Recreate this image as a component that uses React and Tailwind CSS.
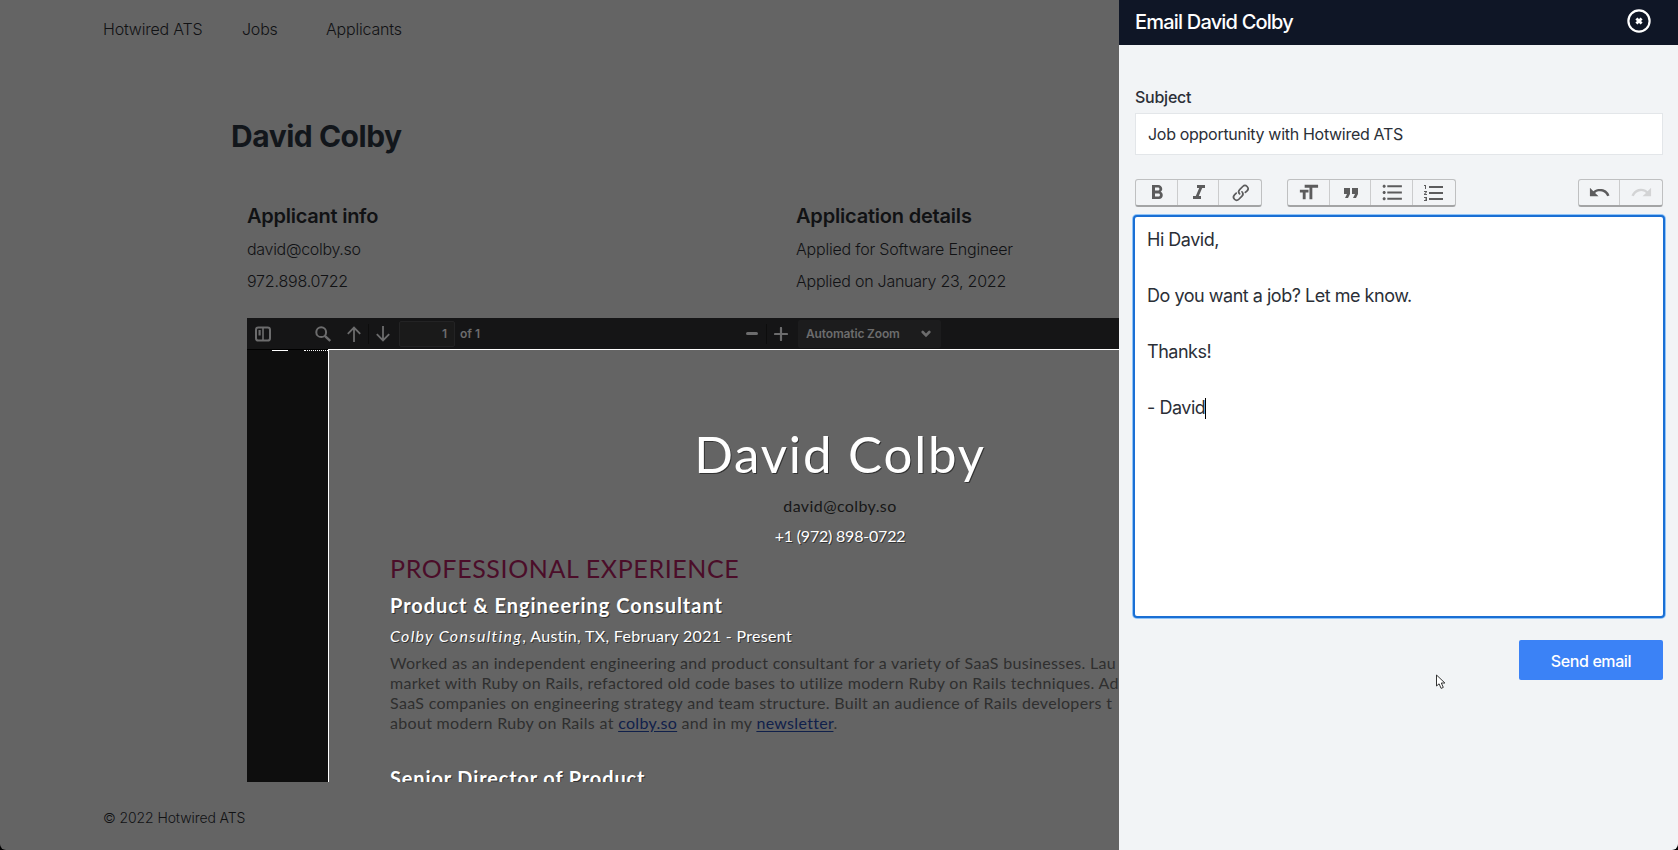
import {
  MdFormatBold,
  MdFormatItalic,
  MdFormatQuote,
  MdFormatListBulleted,
  MdFormatListNumbered,
} from "react-icons/md";

const LinkIcon = () => (
  <svg viewBox="0 0 24 24" className="size-[22px]" fill="currentColor">
    <path d="M9.88 13.7a4.3 4.3 0 0 1 0-6.07l3.37-3.37a4.26 4.26 0 0 1 6.07 0 4.3 4.3 0 0 1 0 6.06l-1.96 1.72a.91.91 0 1 1-1.3-1.3l1.97-1.71a2.46 2.46 0 0 0-3.48-3.48l-3.38 3.37a2.46 2.46 0 0 0 0 3.48.91.91 0 1 1-1.3 1.3z" />
    <path d="M4.25 19.46a4.3 4.3 0 0 1 0-6.07l1.93-1.9a.91.91 0 1 1 1.3 1.3l-1.93 1.9a2.46 2.46 0 0 0 3.48 3.48l3.37-3.38c.96-.96.96-2.52 0-3.48a.91.91 0 1 1 1.3-1.3 4.3 4.3 0 0 1 0 6.07l-3.38 3.38a4.26 4.26 0 0 1-6.07 0z" />
  </svg>
);

const HeadingIcon = () => (
  <svg viewBox="0 0 24 24" className="size-[23px]" fill="currentColor">
    <path d="M12 9v3H9v7H6v-7H3V9h9zM8 4h14v3h-6v12h-3V7H8V4z" />
  </svg>
);

const UndoIcon = () => (
  <svg viewBox="0 0 24 24" className="size-[23px]" fill="currentColor">
    <path d="M12.5 8c-2.6 0-5 1-6.9 2.6L2 7v9h9l-3.6-3.6A8 8 0 0 1 20 16l2.4-.8a10.5 10.5 0 0 0-10-7.2z" />
  </svg>
);

const RedoIcon = () => (
  <svg viewBox="0 0 24 24" className="size-[23px]" fill="currentColor">
    <path d="M18.4 10.6a10.5 10.5 0 0 0-16.9 4.6L4 16a8 8 0 0 1 12.7-3.6L13 16h9V7l-3.6 3.6z" />
  </svg>
);

const SidebarIcon = () => (
  <svg viewBox="0 0 16 16" className="size-4" fill="none" stroke="currentColor" strokeWidth="2">
    <rect x="1" y="1.4" width="14" height="13.2" rx="2.4" />
    <path d="M8 1.4v13.2" strokeWidth="1.6" />
    <path d="M4.6 4v5.5" strokeWidth="2.2" />
  </svg>
);

const SearchIcon = () => (
  <svg viewBox="0 0 16 16" className="size-4" fill="none" stroke="currentColor">
    <circle cx="6.2" cy="6.2" r="4.9" strokeWidth="2" />
    <path d="M9.8 9.8l5.4 5.2" strokeWidth="2.4" />
  </svg>
);

const ArrowUp = () => (
  <svg viewBox="0 0 14 16" className="h-4 w-3.5" fill="none" stroke="currentColor" strokeWidth="1.8">
    <path d="M7 16V1.6M0.8 7.8L7 1.5l6.2 6.3" />
  </svg>
);

const ArrowDown = () => (
  <svg viewBox="0 0 14 16" className="h-4 w-3.5" fill="none" stroke="currentColor" strokeWidth="1.8">
    <path d="M7 0v14.4M0.8 8.2L7 14.5l6.2-6.3" />
  </svg>
);

function ToolGroup({ children }) {
  return (
    <div className="flex h-[28px] divide-x divide-[#cbcccd] overflow-hidden rounded-[3px] border border-b-2 border-[#bfc0c1] border-b-[#a3a4a5] text-[#5c5c5d]">
      {children}
    </div>
  );
}

function Tool({ children, dim }) {
  return (
    <button className={"flex h-full w-[41.7px] items-center justify-center pl-px " + (dim ? "text-[#d3d4d5]" : "")}>
      {children}
    </button>
  );
}

function Page() {
  return (
    <div className="h-full w-[1119px] shrink-0 overflow-hidden bg-[#646464] font-light text-[#111214]">
      <nav className="flex h-[58px] items-center pl-[103px] text-[16px] tracking-[-0.2px]">
        <a className="w-[139px]">Hotwired ATS</a>
        <a className="w-[84px]">Jobs</a>
        <a>Applicants</a>
      </nav>

      <h1 className="mt-[58px] pl-[231px] text-[30px] leading-[40px] font-bold tracking-[-0.47px] text-[#12161b]">
        David Colby
      </h1>

      <section className="mt-[46px] flex pl-[247px]">
        <div className="w-[549px]">
          <h2 className="text-[20px] leading-7 font-semibold tracking-[-0.25px]">Applicant info</h2>
          <p className="mt-[7px] text-[16px] leading-6 tracking-[-0.3px]">david@colby.so</p>
          <p className="mt-2 text-[16px] leading-6 tracking-[-0.2px]">972.898.0722</p>
        </div>
        <div>
          <h2 className="text-[20px] leading-7 font-semibold tracking-[-0.2px]">Application details</h2>
          <p className="mt-[7px] text-[16px] leading-6 tracking-[-0.2px] whitespace-nowrap">Applied for Software Engineer</p>
          <p className="mt-2 text-[16px] leading-6 tracking-[-0.25px] whitespace-nowrap">Applied on January 23, 2022</p>
        </div>
      </section>

      <div className="mt-[25px] ml-[247px] flex h-[464px] flex-col overflow-hidden">
        <div className="flex h-[31px] shrink-0 items-center bg-[#151516] pl-2 font-['Inter',sans-serif] text-[12px] font-semibold text-[#6c6c6d]">
          <SidebarIcon />
          <span className="ml-11"><SearchIcon /></span>
          <span className="ml-4"><ArrowUp /></span>
          <span className="mx-[7px] h-5 w-px bg-[#0d0d0d]" />
          <ArrowDown />
          <span className="ml-[9px] flex h-[26px] w-[56px] items-center justify-end rounded-[2px] border border-[#232324] bg-[#1a1a1a] pr-[7px]">1</span>
          <span className="ml-[5px] w-[286px]">of 1</span>
          <span className="h-[2.5px] w-3 rounded bg-current" />
          <span className="mr-[7px] ml-2 h-5 w-px bg-[#0d0d0d]" />
          <svg viewBox="0 0 14 14" className="size-3.5" stroke="currentColor" strokeWidth="2.2" strokeLinecap="round">
            <path d="M7 1v12M1 7h12" />
          </svg>
          <span className="ml-[10px] flex h-7 w-[143px] items-center justify-between rounded-[2px] bg-[#1c1c1d] pr-[10px] pl-2">
            <span className="tracking-[-0.15px] whitespace-nowrap">Automatic Zoom</span>
            <svg viewBox="0 0 10 8" className="h-2 w-2.5" fill="none" stroke="currentColor" strokeWidth="2.6" strokeLinecap="round">
              <path d="M1.7 2L5 5.4L8.3 2" />
            </svg>
          </span>
        </div>

        <div className="flex min-h-0 flex-1">
          <div className="w-[81px] shrink-0 border-t border-black bg-[#0e0e0e]">
            <div className="flex h-px">
              <span className="ml-[25px] w-4 bg-white" />
              <span className="ml-4 h-px w-[25px] border-t border-dotted border-white" />
            </div>
          </div>
          <div className="w-[1023px] shrink-0 border-t border-l border-white font-['Lato',sans-serif]">
            <div className="text-center font-normal text-white">
              <div className="mt-[74px] text-[51px] leading-[60px] tracking-[1.8px] [text-shadow:1px_1px_0_#333]">David Colby</div>
              <div className="mt-[10px] text-[16px] leading-6 tracking-[0.4px] text-[#171717]">david@colby.so</div>
              <div className="mt-[6px] text-[16px] leading-6 tracking-[-0.2px] [text-shadow:1px_1px_0_#333]">+1 (972) 898-0722</div>
            </div>
            <div className="pl-[61px] whitespace-nowrap">
              <div className="mt-[4px] text-[25px] leading-8 font-normal tracking-[0.62px] text-[#4b0d29]">PROFESSIONAL EXPERIENCE</div>
              <div className="mt-[7px] text-[20px] leading-7 font-bold tracking-[0.97px] text-white [text-shadow:1px_1px_0_#333]">
                Product &amp; Engineering Consultant
              </div>
              <div className="mt-[5px] text-[16px] leading-6 font-normal text-white [text-shadow:1px_1px_0_#333]">
                <em className="tracking-[1.3px]">Colby Consulting</em>
                <span className="tracking-[0.32px]">, Austin, TX, February 2021 - Present</span>
              </div>
              <div className="mt-[5px] text-[16px] leading-5 font-normal tracking-[0.31px] text-[#2f2f2f]">
                <p>Worked as an independent engineering and product consultant for a variety of SaaS businesses. Lau</p>
                <p>market with Ruby on Rails, refactored old code bases to utilize modern Ruby on Rails techniques. Ad</p>
                <p>SaaS companies on engineering strategy and team structure. Built an audience of Rails developers t</p>
                <p>
                  about modern Ruby on Rails at <a className="text-[#10204a] underline underline-offset-2">colby.so</a> and in my{" "}
                  <a className="text-[#10204a] underline underline-offset-2">newsletter</a>.
                </p>
              </div>
              <div className="mt-[31px] text-[20px] leading-7 font-bold tracking-[0.85px] text-white [text-shadow:1px_1px_0_#333]">
                Senior Director of Product
              </div>
            </div>
          </div>
        </div>
      </div>

      <footer className="mt-[26px] pl-[103px] text-[14px] leading-5 tracking-[-0.1px]">© 2022 Hotwired ATS</footer>
    </div>
  );
}

function EmailPanel() {
  return (
    <aside className="h-full w-[559px] shrink-0 bg-[#f2f4f6] text-[#2b2f37]">
      <header className="flex h-[45px] items-center justify-between bg-[#0f1626] pr-[27px] pb-[3px] pl-4 text-white">
        <h2 className="pt-px text-[20px] font-medium tracking-[-0.8px]">Email David Colby</h2>
        <svg viewBox="0 0 24 24" className="size-6" fill="none" stroke="currentColor">
          <circle cx="12" cy="12" r="10.6" strokeWidth="2.2" />
          <path d="M9.4 9.4l5.2 5.2M14.6 9.4l-5.2 5.2" strokeWidth="2.8" />
        </svg>
      </header>

      <div className="pt-10 pr-[15px] pl-4">
        <label className="block text-[16px] leading-6 font-medium tracking-[-0.25px]">Subject</label>
        <div className="mt-1 flex h-[42px] items-center border border-[#e3e6e9] bg-white pl-3 text-[16px] tracking-[-0.3px]">
          Job opportunity with Hotwired ATS
        </div>

        <div className="mt-[24px] flex">
          <ToolGroup>
            <Tool><MdFormatBold size={24} /></Tool>
            <Tool><MdFormatItalic size={24} /></Tool>
            <Tool><LinkIcon /></Tool>
          </ToolGroup>
          <div className="w-[25px]" />
          <ToolGroup>
            <Tool><HeadingIcon /></Tool>
            <Tool><MdFormatQuote size={24} /></Tool>
            <Tool><MdFormatListBulleted size={25} /></Tool>
            <Tool><MdFormatListNumbered size={24} /></Tool>
          </ToolGroup>
          <div className="flex-1" />
          <ToolGroup>
            <Tool><UndoIcon /></Tool>
            <Tool dim><RedoIcon /></Tool>
          </ToolGroup>
        </div>

        <div className="mt-[8px] -mr-[2px] -ml-[2px] h-[403px] rounded-[4px] border-2 border-[#1a6fd4] bg-white px-3 py-[9px] text-[18px] leading-7 tracking-[-0.48px] shadow-[0_0_0_1px_#8fc4f8]">
          <p>Hi David,</p>
          <br />
          <p>Do you want a job? Let me know.</p>
          <br />
          <p>Thanks!</p>
          <br />
          <p className="flex items-center">
            - David<span className="h-[21px] w-px bg-black" />
          </p>
        </div>

        <div className="mt-[22px] flex justify-end">
          <button className="h-10 w-[144px] rounded-[2px] bg-[#3b82f6] pt-px text-[16px] font-medium tracking-[-0.4px] text-white">Send email</button>
        </div>
      </div>
    </aside>
  );
}

export default function App() {
  return (
    <div className="h-[850px] w-[1678px] bg-black">
      <div className="relative flex h-full w-full overflow-hidden rounded-b-[6px] font-['Inter',sans-serif]">
        <Page />
        <EmailPanel />
        <svg viewBox="0 0 12 17" className="absolute top-[674px] left-[1435px] h-[17px] w-3" fill="#fff" stroke="#333" strokeWidth="1">
          <path d="M1.5 1v11l2.6-2.2 2 4.6 2.2-1-2-4.4h3.6z" />
        </svg>
      </div>
    </div>
  );
}
